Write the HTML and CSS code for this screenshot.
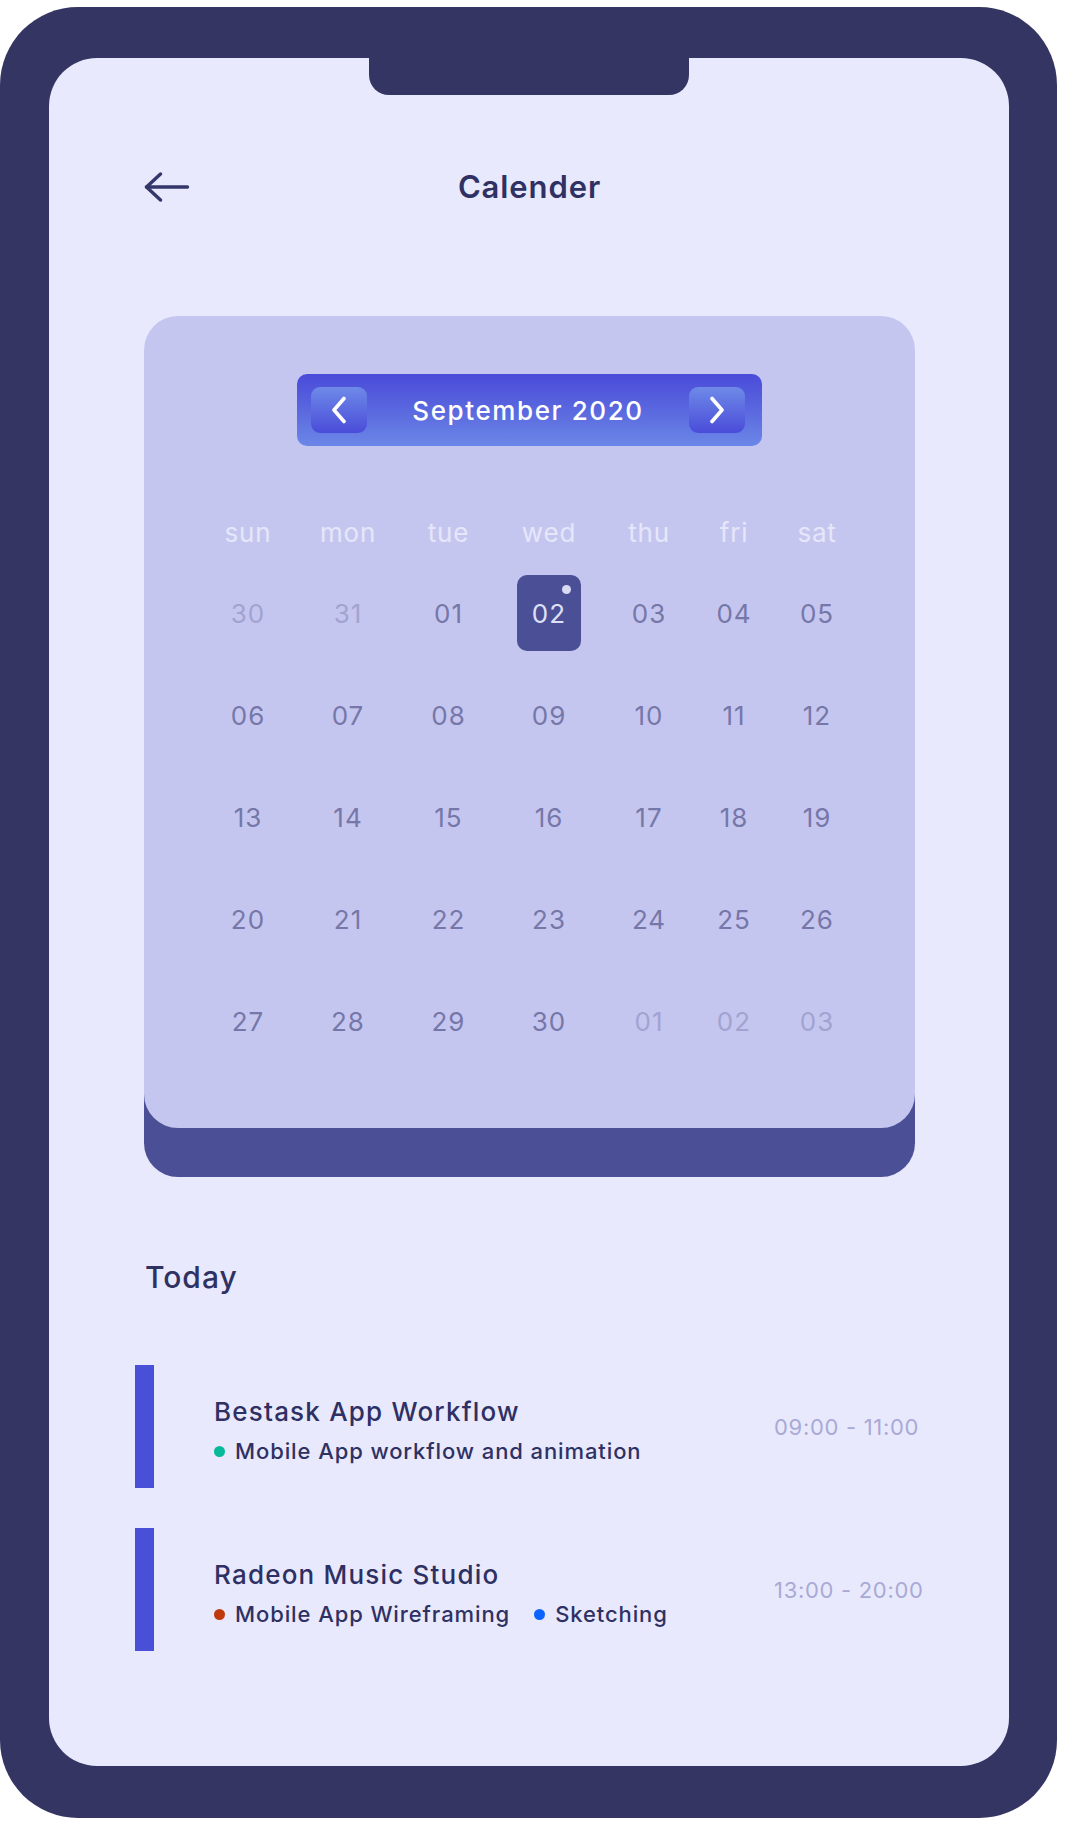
FILE: index.html
```html
<!DOCTYPE html>
<html lang="en">
<head>
<meta charset="utf-8">
<title>Calender</title>
<link rel="stylesheet" href="styles.css">
</head>
<body>
<div class="phone">
  <div class="screen">
    <div class="notch"></div>
    <header class="topbar">
      <svg class="back" width="46" height="30" viewBox="0 0 46 30" aria-hidden="true">
        <line x1="2.5" y1="15" x2="43.5" y2="15" />
        <polyline points="16.5,2 2.5,15 16.5,28" />
      </svg>
      <h1 class="title">Calender</h1>
      <span></span>
    </header>

    <section class="card">
      <div class="month">
        <button class="nav" aria-label="Previous month">
          <svg width="16" height="28" viewBox="0 0 16 28"><polyline points="13,2.5 3,14 13,25.5" /></svg>
        </button>
        <span class="month-label">September 2020</span>
        <button class="nav" aria-label="Next month">
          <svg width="16" height="28" viewBox="0 0 16 28"><polyline points="3,2.5 13,14 3,25.5" /></svg>
        </button>
      </div>

      <div class="weekdays">
        <span>sun</span><span>mon</span><span>tue</span><span>wed</span><span>thu</span><span>fri</span><span>sat</span>
      </div>

      <div class="dates">
        <span class="day muted">30</span><span class="day muted">31</span><span class="day">01</span><span class="day"><span class="selected">02</span></span><span class="day">03</span><span class="day">04</span><span class="day">05</span>
        <span class="day">06</span><span class="day">07</span><span class="day">08</span><span class="day">09</span><span class="day">10</span><span class="day">11</span><span class="day">12</span>
        <span class="day">13</span><span class="day">14</span><span class="day">15</span><span class="day">16</span><span class="day">17</span><span class="day">18</span><span class="day">19</span>
        <span class="day">20</span><span class="day">21</span><span class="day">22</span><span class="day">23</span><span class="day">24</span><span class="day">25</span><span class="day">26</span>
        <span class="day">27</span><span class="day">28</span><span class="day">29</span><span class="day">30</span><span class="day muted">01</span><span class="day muted">02</span><span class="day muted">03</span>
      </div>
    </section>

    <h2 class="today">Today</h2>

    <div class="events">
      <div class="event">
        <div class="bar"></div>
        <div class="info">
          <div class="ev-title">Bestask App Workflow</div>
          <div class="tags">
            <span class="tag"><i class="dot teal"></i>Mobile App workflow and animation</span>
          </div>
        </div>
        <div class="time">09:00 - 11:00</div>
      </div>
      <div class="event">
        <div class="bar"></div>
        <div class="info">
          <div class="ev-title">Radeon Music Studio</div>
          <div class="tags">
            <span class="tag"><i class="dot red"></i>Mobile App Wireframing</span>
            <span class="tag"><i class="dot blue"></i>Sketching</span>
          </div>
        </div>
        <div class="time">13:00 - 20:00</div>
      </div>
    </div>
  </div>
</div>
</body>
</html>
```

FILE: styles.css
```css
* { box-sizing: border-box; }

body {
  margin: 0;
  background: #ffffff;
  font-family: Inter, "Noto Sans", sans-serif;
}

.phone {
  width: 1057px;
  height: 1811px;
  margin-top: 7px;
  background: #343562;
  border-radius: 78px;
  padding: 51px 48px 52px 49px;
}

.screen {
  position: relative;
  height: 100%;
  background: #e8e9fc;
  border-radius: 48px;
  padding: 109px 94px 0 95px;
}

.notch {
  position: absolute;
  left: 320px;
  top: 0;
  width: 320px;
  height: 37px;
  background: #343562;
  border-radius: 0 0 20px 20px;
}

.topbar {
  display: grid;
  grid-template-columns: 1fr auto 1fr;
  align-items: center;
  height: 40px;
}

.back {
  display: block;
  fill: none;
  stroke: #35376b;
  stroke-width: 3.4;
  stroke-linecap: round;
  stroke-linejoin: round;
}

.title {
  margin: 0;
  font-size: 31px;
  line-height: 40px;
  font-weight: 600;
  letter-spacing: 0.9px;
  color: #2f3163;
}

.card {
  margin-top: 109px;
  background: #c5c6ef;
  border-radius: 34px;
  padding: 58px 0 56px 0;
  box-shadow: 0 49px 0 0 #4b4f95;
}

.month {
  width: 465px;
  height: 72px;
  margin: 0 auto;
  display: flex;
  align-items: center;
  padding: 0 17px 0 14px;
  border-radius: 10px;
  background: linear-gradient(180deg, #4a4bd9 0%, #5a68df 50%, #6b87e7 100%);
}

.nav {
  width: 56px;
  height: 46px;
  border: none;
  padding: 0;
  border-radius: 9px;
  background: linear-gradient(180deg, #6e8ae8 0%, #4a4cd9 100%);
  display: flex;
  align-items: center;
  justify-content: center;
}

.nav svg {
  display: block;
  fill: none;
  stroke: #ffffff;
  stroke-width: 3.6;
  stroke-linecap: round;
  stroke-linejoin: round;
}

.month-label {
  flex: 1;
  text-align: center;
  color: #ffffff;
  font-size: 26px;
  font-weight: 500;
  letter-spacing: 1.6px;
}

.weekdays,
.dates {
  display: grid;
  grid-template-columns: 100px 100px 101px 100px 100px 70px 96px;
  margin-left: 54px;
  text-align: center;
}

.weekdays {
  margin-top: 67px;
  height: 40px;
  line-height: 40px;
  font-size: 26px;
  letter-spacing: 0.8px;
  color: #e5e6fa;
}

.dates {
  margin-top: 9px;
  grid-auto-rows: 102px;
  font-size: 26px;
  letter-spacing: 1px;
  color: #7677a9;
}

.day {
  display: flex;
  align-items: center;
  justify-content: center;
}

.day.muted {
  color: #a2a3d0;
}

.selected {
  position: relative;
  width: 64px;
  height: 76px;
  border-radius: 10px;
  background: #4b4f96;
  color: #dfe0f7;
  display: flex;
  align-items: center;
  justify-content: center;
}

.selected::after {
  content: "";
  position: absolute;
  top: 10px;
  right: 10px;
  width: 9px;
  height: 9px;
  border-radius: 50%;
  background: #d9daf4;
}

.today {
  margin: 131px 0 0 1px;
  font-size: 30px;
  line-height: 36px;
  font-weight: 500;
  letter-spacing: 1px;
  color: #2f3163;
}

.events {
  margin-top: 70px;
  margin-left: -9px;
  display: flex;
  flex-direction: column;
  gap: 40px;
}

.event {
  display: flex;
  height: 123px;
}

.bar {
  flex: none;
  width: 19px;
  background: #4a4fd8;
}

.info {
  flex: none;
  width: 560px;
  margin-left: 60px;
  padding-top: 31px;
}

.ev-title {
  font-size: 26px;
  line-height: 32px;
  font-weight: 500;
  letter-spacing: 1.2px;
  color: #2e3063;
}

.tags {
  display: flex;
  gap: 24px;
  margin-top: 9px;
}

.tag {
  display: flex;
  align-items: center;
  font-size: 22px;
  line-height: 28px;
  font-weight: 500;
  letter-spacing: 0.9px;
  color: #2f3163;
}

.dot {
  flex: none;
  width: 11px;
  height: 11px;
  border-radius: 50%;
  margin-right: 10px;
}

.dot.teal { background: #06b99a; }
.dot.red { background: #c0390c; }
.dot.blue { background: #0a64ff; }

.time {
  flex: none;
  align-self: center;
  white-space: nowrap;
  font-size: 22px;
  letter-spacing: 0.7px;
  color: #a8a9d6;
}
```
